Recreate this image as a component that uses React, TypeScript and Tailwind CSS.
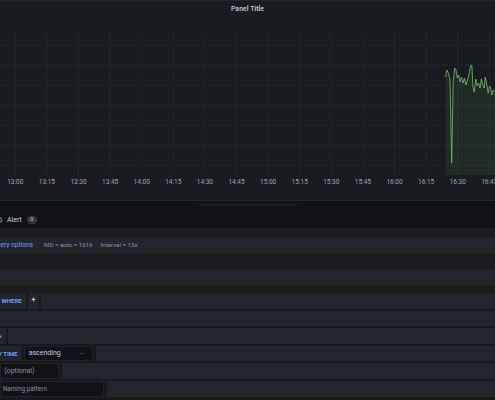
import { Bell, ChevronDown } from 'lucide-react'

const ticks = ['13:00', '13:15', '13:30', '13:45', '14:00', '14:15', '14:30', '14:45', '15:00', '15:15', '15:30', '15:45', '16:00', '16:15', '16:30', '16:45']

const series: [number, number][] = [
  [445.5, 77], [446.8, 70], [448.3, 73], [450, 79], [451.7, 163], [453.2, 82], [454.6, 68], [456, 70],
  [457.3, 78], [458.6, 75], [460, 82], [461.5, 77], [463, 83], [464.5, 78], [466, 85], [467.5, 80],
  [469, 74], [470.5, 66], [471.8, 65], [473, 87], [474.3, 92], [475.8, 79], [477.2, 86], [478.6, 83],
  [480, 88], [481.4, 79], [482.8, 85], [484.2, 88], [485.3, 77], [486.7, 84], [488.2, 93], [489.5, 86],
  [490.8, 88], [492, 95], [493.3, 90], [495, 92],
]

function Chart() {
  const line = series.map(([x, y], i) => `${i ? 'L' : 'M'}${x},${y}`).join(' ')
  const area = `M445.5,175 ${series.map(([x, y]) => `L${x},${y}`).join(' ')} L495,175 Z`
  return (
    <svg width="495" height="182" viewBox="0 18 495 182" className="block">
      {ticks.map((_, i) => (
        <line key={i} x1={15.3 + 31.6 * i} x2={15.3 + 31.6 * i} y1="30" y2="175" stroke="#292c31" strokeWidth="0.6" />
      ))}
      {[45, 65, 85, 105, 125, 145, 165].map(y => (
        <line key={y} x1="0" x2="495" y1={y} y2={y} stroke="#292c31" strokeWidth="0.6" />
      ))}
      <path d={area} fill="#73bf69" fillOpacity="0.1" />
      <path d={line} fill="none" stroke="#73bf69" strokeWidth="0.8" strokeLinejoin="round" />
      {ticks.map((t, i) => (
        <text key={t} x={15.3 + 31.6 * i} y="182" fontSize="6.5" fill="#a2a4ab" textAnchor="middle" dominantBaseline="middle">
          {t}
        </text>
      ))}
    </svg>
  )
}

function Label({ w, children }: { w: string; children: React.ReactNode }) {
  return (
    <div className={`${w} shrink-0 flex items-center justify-end overflow-hidden pr-[4px] bg-[#22252b] text-[6px] font-bold text-[#6e9fff] whitespace-nowrap`}>
      {children}
    </div>
  )
}

function Fill() {
  return <div className="flex-1 bg-[#22252b]" />
}

export default function App() {
  return (
    <div className="w-full h-[400px] overflow-hidden bg-[#181b1f] font-[Roboto,sans-serif] leading-none">
      {/* painel */}
      <div className="h-[200px] border-t border-[#24262b]">
        <div className="h-[17px] flex items-center justify-center text-[7px] font-medium text-[#c9cbd1]">Panel Title</div>
        <Chart />
      </div>

      {/* editor de query */}
      <div className="border-t border-[#26282d] bg-[#1b1c20]">
        <div className="h-[27px] flex flex-col bg-[#111217]">
          <div className="mt-[3px] mx-auto w-[98px] h-[2px] rounded bg-[#202226]" />
          <div className="mt-[6px] h-[16px] flex items-center text-[7px] text-[#ccccdc]">
            <Bell size={6} strokeWidth={2.5} className="-ml-[3px] text-[#ccccdc]" />
            <span className="ml-[4px]">Alert</span>
            <span className="ml-[5px] w-[10px] h-[8px] rounded-full bg-[#34363b] flex items-center justify-center text-[5.5px] text-[#c8c8c8]">0</span>
          </div>
        </div>

        <div className="h-[9px] border-t border-[#1e2024]" />

        <div className="h-[16px] flex items-center bg-[#22252b] text-[6.2px] text-[#8e9099] whitespace-nowrap">
          <div className="w-[33px] flex justify-end overflow-hidden text-[6.6px] text-[#6e9fff]">Query options</div>
          <span className="ml-[11px]">MD = auto = 1616</span>
          <span className="ml-[8px]">Interval = 15s</span>
        </div>

        <div className="h-[16px]" />
        <div className="h-[16px] bg-[#22252b]" />
        <div className="h-[8px]" />

        <div className="flex flex-col gap-[2px] pb-[4px] bg-[#18191d] text-[7px]">
          <div className="h-[15.6px] flex gap-[2.4px]">
            <Label w="w-[25.7px]">WHERE</Label>
            <div className="w-[10.7px] flex items-center justify-center bg-[#22252b] text-[7px] font-bold text-[#c7c9d1]">+</div>
            <Fill />
          </div>
          <div className="h-[15.6px] flex">
            <Fill />
          </div>
          <div className="h-[15.6px] flex gap-[2px]">
            <div className="w-[6px] flex items-center justify-end overflow-hidden pr-[4px] bg-[#22252b] text-[6px] text-[#d9928e]">+</div>
            <Fill />
          </div>
          <div className="h-[15.6px] flex gap-[2.4px]">
            <Label w="w-[21.3px]">ORDER BY TIME</Label>
            <div className="w-[69.5px] flex items-center justify-between pl-[4px] pr-[8px] bg-[#111217] border border-[#1f2126] text-[#ccccdc]">
              <span>ascending</span>
              <ChevronDown size={5} strokeWidth={2.5} className="text-[#8e9099]" />
            </div>
            <Fill />
          </div>
          <div className="h-[15.6px] flex gap-[2.4px]">
            <div className="w-[59.3px] flex items-center pl-[3.3px] bg-[#111217] border border-[#1f2126] text-[#8e9099]">(optional)</div>
            <Fill />
          </div>
          <div className="h-[15.6px] flex gap-[2.4px]">
            <div className="w-[104.3px] flex items-center pl-[1.7px] bg-[#111217] border border-[#1f2126] text-[6.4px] text-[#8e9099]">Naming pattern</div>
            <Fill />
          </div>
        </div>
      </div>
    </div>
  )
}
